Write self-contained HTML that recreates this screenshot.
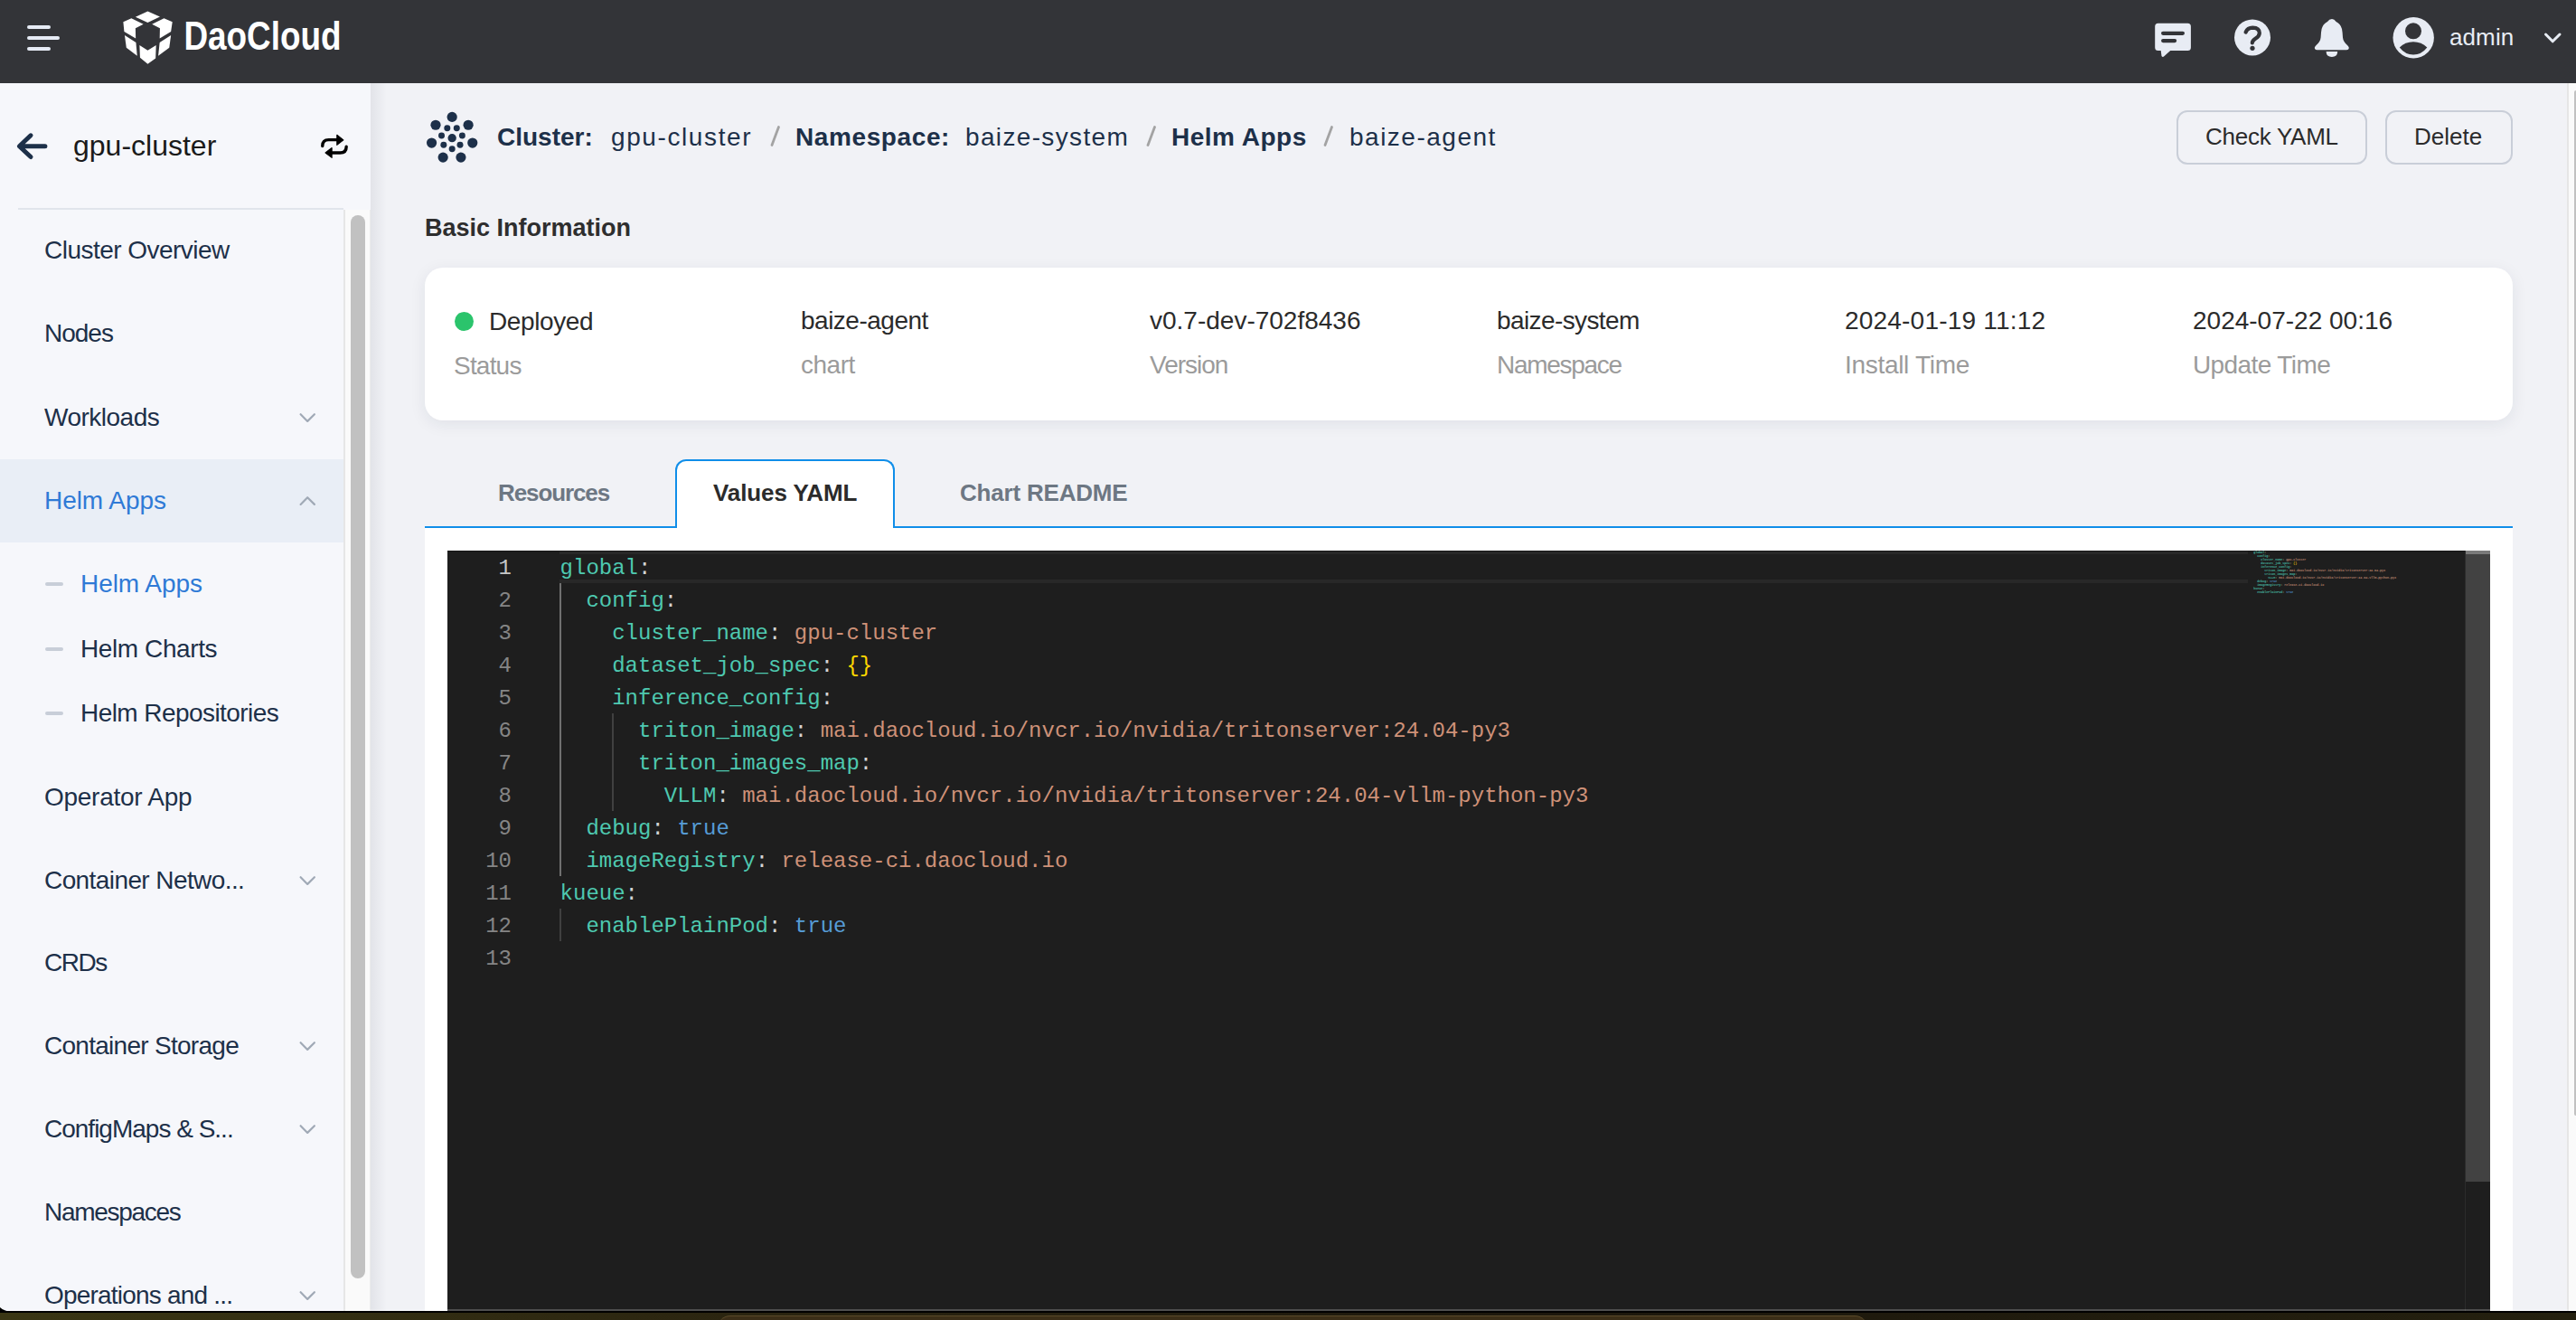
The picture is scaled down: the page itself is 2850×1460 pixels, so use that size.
<!DOCTYPE html><html><head><meta charset="utf-8"><style>
html,body{margin:0;padding:0;width:2850px;height:1460px;overflow:hidden;background:#f1f2f6;font-family:"Liberation Sans",sans-serif;}
.t{position:absolute;white-space:pre;line-height:0;}
svg{position:absolute;overflow:visible}
</style></head><body>
<div style="position:absolute;left:0px;top:92px;width:410px;height:1358px;background:#f6f7fb"></div>
<div style="position:absolute;left:410px;top:92px;width:18px;height:1358px;background:linear-gradient(to right,rgba(30,40,60,0.07),rgba(30,40,60,0))"></div>
<div style="position:absolute;left:0px;top:0px;width:2850px;height:92px;background:#333438"></div>
<div style="position:absolute;left:30px;top:28px;width:26px;height:4px;background:#e6ebf5;border-radius:2px"></div>
<div style="position:absolute;left:30px;top:40px;width:36px;height:4px;background:#e6ebf5;border-radius:2px"></div>
<div style="position:absolute;left:30px;top:52px;width:26px;height:4px;background:#e6ebf5;border-radius:2px"></div>
<svg style="left:130px;top:8px" width="70" height="70" viewBox="0 0 1320 1320"><g fill="#fff">
<polygon points="375,205 630,85 885,200 630,320"/>
<polygon points="120,305 290,232 540,355 375,440 380,650 140,510"/>
<polygon points="1145,305 970,232 720,355 885,440 880,650 1115,510"/>
<polygon points="150,585 385,735 410,1015 185,845"/>
<polygon points="1115,585 880,735 850,1015 1080,845"/>
<polygon points="460,790 630,900 805,790 795,1065 630,1185 470,1050"/>
</g></svg>
<svg style="left:0;top:0" width="400" height="92"><text x="203.5" y="54.6" font-family="Liberation Sans" font-weight="700" font-size="45" fill="#fff" textLength="174" lengthAdjust="spacingAndGlyphs">DaoCloud</text></svg>
<svg style="left:2380px;top:20px" width="50" height="50" viewBox="2380 20 50 50">
<path fill="#e8ecf4" d="M2387.7 25.7 H2420.4 A3.5 3.5 0 0 1 2423.9 29.2 V52.6 A3.5 3.5 0 0 1 2420.4 56.1 H2401.2 L2394 62.6 Q2392.6 63.6 2391.5 62 L2390.7 56.1 H2387.7 A3.5 3.5 0 0 1 2384.2 52.6 V29.2 A3.5 3.5 0 0 1 2387.7 25.7 Z"/>
<rect x="2391" y="34.7" width="26" height="4.2" rx="2.1" fill="#333438"/>
<rect x="2391" y="42.9" width="17.2" height="4.3" rx="2.15" fill="#333438"/>
</svg>
<svg style="left:2460px;top:10px" width="60" height="60" viewBox="2460 10 60 60">
<circle cx="2492" cy="41.4" r="20" fill="#e8ecf4"/>
<path d="M2484.6 35.6 Q2486.6 30.6 2492.2 30.6 Q2499.8 30.8 2499.8 36.6 Q2499.6 40 2495.6 42.6 Q2492 45 2491.8 47.4" fill="none" stroke="#333438" stroke-width="4.2" stroke-linecap="round"/>
<circle cx="2492" cy="53.3" r="2.6" fill="#333438"/>
</svg>
<svg style="left:2550px;top:10px" width="60" height="60" viewBox="2550 10 60 60">
<path fill="#e8ecf4" d="M2580 21 Q2582.6 21 2584.6 24 Q2589.6 26.5 2591 32 Q2591.8 36 2592 41.5 Q2592.4 46 2597 50 Q2599.6 52.4 2598.4 54.2 Q2597.6 55.2 2596 55.2 H2563.6 Q2562 55.2 2561.2 54.2 Q2560 52.4 2562.6 50 Q2567.2 46 2567.6 41.5 Q2567.8 36 2568.6 32 Q2570 26.5 2575 24 Q2577 21 2580 21 Z"/>
<path fill="#e8ecf4" d="M2573.6 57 H2586.2 Q2586 62.9 2579.9 62.9 Q2573.8 62.9 2573.6 57 Z"/>
</svg>
<svg style="left:2640px;top:10px" width="60" height="60" viewBox="2640 10 60 60">
<circle cx="2670.2" cy="41.8" r="22.7" fill="#e8ecf4"/>
<circle cx="2670" cy="34.3" r="9" fill="#333438"/>
<path d="M2654.8 52.4 Q2661 46.3 2670 46.3 Q2679 46.3 2685.3 52.4 Q2679 60.4 2670 60.4 Q2661 60.4 2654.8 52.4 Z" fill="#333438"/>
</svg>
<div class="t" style="left:2710px;top:41px;font-size:26px;font-weight:400;color:#e8ecf4;letter-spacing:0.1px;font-family:'Liberation Sans',sans-serif;">admin</div>
<svg style="left:2810px;top:30px" width="30" height="24" viewBox="2810 30 30 24"><path d="M2816.5 38 L2824.2 45.8 L2832 38" fill="none" stroke="#e8ecf4" stroke-width="3" stroke-linecap="round" stroke-linejoin="round"/></svg>
<svg style="left:10px;top:140px" width="50" height="45" viewBox="10 140 50 45"><path d="M34 149.8 L21.4 161.7 L34 173.5 M21.8 161.7 H49.9" fill="none" stroke="#1d3049" stroke-width="5" stroke-linecap="round" stroke-linejoin="round"/></svg>
<div class="t" style="left:81px;top:161px;font-size:32px;font-weight:400;color:#1a1a1a;letter-spacing:0px;font-family:'Liberation Sans',sans-serif;">gpu-cluster</div>
<svg style="left:345px;top:140px" width="50" height="45" viewBox="0 0 1467 1320">
<path d="M345 630 Q345 430 545 430 H830" fill="none" stroke="#000" stroke-width="100" stroke-linecap="round"/>
<polygon points="815,270 1025,435 815,600" fill="#000" stroke="#000" stroke-width="30" stroke-linejoin="round"/>
<path d="M1120 650 Q1120 850 920 850 H640" fill="none" stroke="#000" stroke-width="100" stroke-linecap="round"/>
<polygon points="650,690 440,850 650,1010" fill="#000" stroke="#000" stroke-width="30" stroke-linejoin="round"/>
</svg>
<div style="position:absolute;left:20px;top:230px;width:360px;height:2px;background:#e1e5ec"></div>
<div style="position:absolute;left:380px;top:232px;width:30px;height:1218px;background:#fafafa;border-left:2px solid #e6e6e6;border-right:1px solid #ececec;box-sizing:border-box"></div>
<div style="position:absolute;left:388px;top:238px;width:16px;height:1176px;background:#c1c1c1;border-radius:8px"></div>
<div style="position:absolute;left:0px;top:508px;width:380px;height:92px;background:#e9eef6"></div>
<div class="t" style="left:49px;top:277px;font-size:28px;font-weight:400;color:#1d3049;letter-spacing:-0.53px;font-family:'Liberation Sans',sans-serif;">Cluster Overview</div>
<div class="t" style="left:49px;top:369px;font-size:28px;font-weight:400;color:#1d3049;letter-spacing:-1.0px;font-family:'Liberation Sans',sans-serif;">Nodes</div>
<div class="t" style="left:49px;top:462px;font-size:28px;font-weight:400;color:#1d3049;letter-spacing:-0.5px;font-family:'Liberation Sans',sans-serif;">Workloads</div>
<svg style="left:320px;top:442px" width="40" height="40" viewBox="320 442 40 40"><path d="M332.6 458.2 L340.2 465.9 L347.9 458.2" fill="none" stroke="#a0a9b6" stroke-width="2.2" stroke-linecap="round" stroke-linejoin="round"/></svg>
<div class="t" style="left:49px;top:554px;font-size:28px;font-weight:400;color:#2f7ad6;letter-spacing:-0.05px;font-family:'Liberation Sans',sans-serif;">Helm Apps</div>
<svg style="left:320px;top:534px" width="40" height="40" viewBox="320 534 40 40"><path d="M332.6 557.9 L340.2 550.2 L347.9 557.9" fill="none" stroke="#a0a9b6" stroke-width="2.2" stroke-linecap="round" stroke-linejoin="round"/></svg>
<div class="t" style="left:49px;top:882px;font-size:28px;font-weight:400;color:#1d3049;letter-spacing:-0.27px;font-family:'Liberation Sans',sans-serif;">Operator App</div>
<div class="t" style="left:49px;top:974px;font-size:28px;font-weight:400;color:#1d3049;letter-spacing:-0.59px;font-family:'Liberation Sans',sans-serif;">Container Netwo...</div>
<svg style="left:320px;top:954px" width="40" height="40" viewBox="320 954 40 40"><path d="M332.6 970.2 L340.2 977.9 L347.9 970.2" fill="none" stroke="#a0a9b6" stroke-width="2.2" stroke-linecap="round" stroke-linejoin="round"/></svg>
<div class="t" style="left:49px;top:1065px;font-size:28px;font-weight:400;color:#1d3049;letter-spacing:-1.5px;font-family:'Liberation Sans',sans-serif;">CRDs</div>
<div class="t" style="left:49px;top:1157px;font-size:28px;font-weight:400;color:#1d3049;letter-spacing:-0.72px;font-family:'Liberation Sans',sans-serif;">Container Storage</div>
<svg style="left:320px;top:1137px" width="40" height="40" viewBox="320 1137 40 40"><path d="M332.6 1153.2 L340.2 1160.9 L347.9 1153.2" fill="none" stroke="#a0a9b6" stroke-width="2.2" stroke-linecap="round" stroke-linejoin="round"/></svg>
<div class="t" style="left:49px;top:1249px;font-size:28px;font-weight:400;color:#1d3049;letter-spacing:-1.0px;font-family:'Liberation Sans',sans-serif;">ConfigMaps &amp; S...</div>
<svg style="left:320px;top:1229px" width="40" height="40" viewBox="320 1229 40 40"><path d="M332.6 1245.2 L340.2 1252.9 L347.9 1245.2" fill="none" stroke="#a0a9b6" stroke-width="2.2" stroke-linecap="round" stroke-linejoin="round"/></svg>
<div class="t" style="left:49px;top:1341px;font-size:28px;font-weight:400;color:#1d3049;letter-spacing:-1.3px;font-family:'Liberation Sans',sans-serif;">Namespaces</div>
<div class="t" style="left:49px;top:1433px;font-size:28px;font-weight:400;color:#1d3049;letter-spacing:-0.8px;font-family:'Liberation Sans',sans-serif;">Operations and ...</div>
<svg style="left:320px;top:1413px" width="40" height="40" viewBox="320 1413 40 40"><path d="M332.6 1429.2 L340.2 1436.9 L347.9 1429.2" fill="none" stroke="#a0a9b6" stroke-width="2.2" stroke-linecap="round" stroke-linejoin="round"/></svg>
<div class="t" style="left:89px;top:646px;font-size:28px;font-weight:400;color:#2f7ad6;letter-spacing:-0.05px;font-family:'Liberation Sans',sans-serif;">Helm Apps</div>
<div style="position:absolute;left:50px;top:644px;width:20px;height:4px;background:#c8ced8;border-radius:2px"></div>
<div class="t" style="left:89px;top:718px;font-size:28px;font-weight:400;color:#1d3049;letter-spacing:-0.4px;font-family:'Liberation Sans',sans-serif;">Helm Charts</div>
<div style="position:absolute;left:50px;top:716px;width:20px;height:4px;background:#c8ced8;border-radius:2px"></div>
<div class="t" style="left:89px;top:789px;font-size:28px;font-weight:400;color:#1d3049;letter-spacing:-0.56px;font-family:'Liberation Sans',sans-serif;">Helm Repositories</div>
<div style="position:absolute;left:50px;top:787px;width:20px;height:4px;background:#c8ced8;border-radius:2px"></div>
<svg style="left:400px;top:92px" width="140" height="100" viewBox="0 0 601 428.3"><circle cx="430" cy="160" r="24" fill="#1d3049"/><circle cx="352" cy="198" r="24" fill="#1d3049"/><circle cx="507" cy="198" r="24" fill="#1d3049"/><circle cx="333" cy="283" r="24" fill="#1d3049"/><circle cx="527" cy="283" r="24" fill="#1d3049"/><circle cx="387" cy="352" r="24" fill="#1d3049"/><circle cx="472" cy="352" r="24" fill="#1d3049"/><circle cx="407" cy="213" r="15" fill="#1d3049"/><circle cx="452" cy="213" r="15" fill="#1d3049"/><circle cx="380" cy="248" r="15" fill="#1d3049"/><circle cx="478" cy="248" r="15" fill="#1d3049"/><circle cx="390" cy="292" r="15" fill="#1d3049"/><circle cx="468" cy="292" r="15" fill="#1d3049"/><circle cx="430" cy="312" r="15" fill="#1d3049"/><circle cx="430" cy="260" r="20" fill="#1d3049"/></svg>
<div class="t" style="left:550px;top:152px;font-size:28px;font-weight:700;color:#1d3049;letter-spacing:0px;font-family:'Liberation Sans',sans-serif;">Cluster:</div>
<div class="t" style="left:676px;top:152px;font-size:28px;font-weight:400;color:#1d3049;letter-spacing:1.6px;font-family:'Liberation Sans',sans-serif;">gpu-cluster</div>
<div class="t" style="left:880px;top:152px;font-size:28px;font-weight:700;color:#1d3049;letter-spacing:0.6px;font-family:'Liberation Sans',sans-serif;">Namespace:</div>
<div class="t" style="left:1068px;top:152px;font-size:28px;font-weight:400;color:#1d3049;letter-spacing:1.35px;font-family:'Liberation Sans',sans-serif;">baize-system</div>
<div class="t" style="left:1296px;top:152px;font-size:28px;font-weight:700;color:#1d3049;letter-spacing:0.5px;font-family:'Liberation Sans',sans-serif;">Helm Apps</div>
<div class="t" style="left:1493px;top:152px;font-size:28px;font-weight:400;color:#1d3049;letter-spacing:1.5px;font-family:'Liberation Sans',sans-serif;">baize-agent</div>
<svg style="left:848.5px;top:130px" width="20" height="40" viewBox="848.5 130 20 40"><line x1="853.5" y1="160.5" x2="861.0" y2="140.5" stroke="#a3a3a3" stroke-width="2.8" stroke-linecap="round"/></svg>
<svg style="left:1264.5px;top:130px" width="20" height="40" viewBox="1264.5 130 20 40"><line x1="1269.5" y1="160.5" x2="1277.0" y2="140.5" stroke="#a3a3a3" stroke-width="2.8" stroke-linecap="round"/></svg>
<svg style="left:1461px;top:130px" width="20" height="40" viewBox="1461 130 20 40"><line x1="1466" y1="160.5" x2="1473.5" y2="140.5" stroke="#a3a3a3" stroke-width="2.8" stroke-linecap="round"/></svg>
<div style="position:absolute;left:2408px;top:122px;width:211px;height:60px;border:2px solid #c9ced8;border-radius:12px;box-sizing:border-box"></div>
<div class="t" style="left:2440px;top:151px;font-size:26px;font-weight:400;color:#2b2b2b;letter-spacing:-0.25px;font-family:'Liberation Sans',sans-serif;">Check YAML</div>
<div style="position:absolute;left:2639px;top:122px;width:141px;height:60px;border:2px solid #c9ced8;border-radius:12px;box-sizing:border-box"></div>
<div class="t" style="left:2671px;top:151px;font-size:26px;font-weight:400;color:#2b2b2b;letter-spacing:0px;font-family:'Liberation Sans',sans-serif;">Delete</div>
<div class="t" style="left:470px;top:252px;font-size:27px;font-weight:700;color:#2e2e2e;letter-spacing:0px;font-family:'Liberation Sans',sans-serif;">Basic Information</div>
<div style="position:absolute;left:470px;top:296px;width:2310px;height:169px;background:#fff;border-radius:20px;box-shadow:0 4px 18px rgba(30,40,60,0.08)"></div>
<div style="position:absolute;left:503px;top:345px;width:21px;height:21px;border-radius:50%;background:#2bc46c"></div>
<div class="t" style="left:541px;top:356px;font-size:28px;font-weight:400;color:#2b2b2b;letter-spacing:-0.4px;font-family:'Liberation Sans',sans-serif;">Deployed</div>
<div class="t" style="left:502px;top:405px;font-size:28px;font-weight:400;color:#9b9b9b;letter-spacing:-0.8px;font-family:'Liberation Sans',sans-serif;">Status</div>
<div class="t" style="left:886px;top:355px;font-size:28px;font-weight:400;color:#2b2b2b;letter-spacing:-0.5px;font-family:'Liberation Sans',sans-serif;">baize-agent</div>
<div class="t" style="left:886px;top:404px;font-size:28px;font-weight:400;color:#9b9b9b;letter-spacing:-0.5px;font-family:'Liberation Sans',sans-serif;">chart</div>
<div class="t" style="left:1272px;top:355px;font-size:28px;font-weight:400;color:#2b2b2b;letter-spacing:0px;font-family:'Liberation Sans',sans-serif;">v0.7-dev-702f8436</div>
<div class="t" style="left:1272px;top:404px;font-size:28px;font-weight:400;color:#9b9b9b;letter-spacing:-1.0px;font-family:'Liberation Sans',sans-serif;">Version</div>
<div class="t" style="left:1656px;top:355px;font-size:28px;font-weight:400;color:#2b2b2b;letter-spacing:-0.6px;font-family:'Liberation Sans',sans-serif;">baize-system</div>
<div class="t" style="left:1656px;top:404px;font-size:28px;font-weight:400;color:#9b9b9b;letter-spacing:-1.3px;font-family:'Liberation Sans',sans-serif;">Namespace</div>
<div class="t" style="left:2041px;top:355px;font-size:28px;font-weight:400;color:#2b2b2b;letter-spacing:0.2px;font-family:'Liberation Sans',sans-serif;">2024-01-19 11:12</div>
<div class="t" style="left:2041px;top:404px;font-size:28px;font-weight:400;color:#9b9b9b;letter-spacing:-0.3px;font-family:'Liberation Sans',sans-serif;">Install Time</div>
<div class="t" style="left:2426px;top:355px;font-size:28px;font-weight:400;color:#2b2b2b;letter-spacing:0px;font-family:'Liberation Sans',sans-serif;">2024-07-22 00:16</div>
<div class="t" style="left:2426px;top:404px;font-size:28px;font-weight:400;color:#9b9b9b;letter-spacing:-0.6px;font-family:'Liberation Sans',sans-serif;">Update Time</div>
<div style="position:absolute;left:470px;top:582px;width:2310px;height:2px;background:#108ee9"></div>
<div style="position:absolute;left:470px;top:584px;width:2310px;height:866px;background:#fff"></div>
<div style="position:absolute;left:747px;top:508px;width:243px;height:76px;background:#fff;border:2px solid #108ee9;border-bottom:none;border-radius:12px 12px 0 0;box-sizing:border-box"></div>
<div class="t" style="left:551px;top:545px;font-size:26px;font-weight:700;color:#6d7783;letter-spacing:-1.1px;font-family:'Liberation Sans',sans-serif;">Resources</div>
<div class="t" style="left:789px;top:545px;font-size:26px;font-weight:700;color:#2b2b2b;letter-spacing:-0.1px;font-family:'Liberation Sans',sans-serif;">Values YAML</div>
<div class="t" style="left:1062px;top:545px;font-size:26px;font-weight:700;color:#6d7783;letter-spacing:-0.2px;font-family:'Liberation Sans',sans-serif;">Chart README</div>
<div style="position:absolute;left:495px;top:609px;width:2260px;height:841px;background:#1e1e1e"></div>
<div style="position:absolute;left:495px;top:609px;width:2260px;height:1px;background:#161616"></div>
<div style="position:absolute;left:619px;top:610px;width:1868px;height:35px;border-top:3px solid #282828;border-bottom:4px solid #282828;box-sizing:border-box"></div>
<div class="t" style="left:551.6px;top:629px;font-size:24px;font-weight:400;color:#c6c6c6;letter-spacing:0px;font-family:'Liberation Mono',sans-serif;">1</div>
<div class="t" style="left:619.6px;top:629px;font-size:24px;font-family:'Liberation Mono',monospace"><span style="color:#4ec9b0">global</span><span style="color:#d4d4d4">:</span></div>
<div class="t" style="left:551.6px;top:665px;font-size:24px;font-weight:400;color:#858585;letter-spacing:0px;font-family:'Liberation Mono',sans-serif;">2</div>
<div class="t" style="left:648.4px;top:665px;font-size:24px;font-family:'Liberation Mono',monospace"><span style="color:#4ec9b0">config</span><span style="color:#d4d4d4">:</span></div>
<div class="t" style="left:551.6px;top:701px;font-size:24px;font-weight:400;color:#858585;letter-spacing:0px;font-family:'Liberation Mono',sans-serif;">3</div>
<div class="t" style="left:677.2px;top:701px;font-size:24px;font-family:'Liberation Mono',monospace"><span style="color:#4ec9b0">cluster_name</span><span style="color:#d4d4d4">: </span><span style="color:#ce9178">gpu-cluster</span></div>
<div class="t" style="left:551.6px;top:737px;font-size:24px;font-weight:400;color:#858585;letter-spacing:0px;font-family:'Liberation Mono',sans-serif;">4</div>
<div class="t" style="left:677.2px;top:737px;font-size:24px;font-family:'Liberation Mono',monospace"><span style="color:#4ec9b0">dataset_job_spec</span><span style="color:#d4d4d4">: </span><span style="color:#ffd700">{}</span></div>
<div class="t" style="left:551.6px;top:773px;font-size:24px;font-weight:400;color:#858585;letter-spacing:0px;font-family:'Liberation Mono',sans-serif;">5</div>
<div class="t" style="left:677.2px;top:773px;font-size:24px;font-family:'Liberation Mono',monospace"><span style="color:#4ec9b0">inference_config</span><span style="color:#d4d4d4">:</span></div>
<div class="t" style="left:551.6px;top:809px;font-size:24px;font-weight:400;color:#858585;letter-spacing:0px;font-family:'Liberation Mono',sans-serif;">6</div>
<div class="t" style="left:706.0px;top:809px;font-size:24px;font-family:'Liberation Mono',monospace"><span style="color:#4ec9b0">triton_image</span><span style="color:#d4d4d4">: </span><span style="color:#ce9178">mai.daocloud.io/nvcr.io/nvidia/tritonserver:24.04-py3</span></div>
<div class="t" style="left:551.6px;top:845px;font-size:24px;font-weight:400;color:#858585;letter-spacing:0px;font-family:'Liberation Mono',sans-serif;">7</div>
<div class="t" style="left:706.0px;top:845px;font-size:24px;font-family:'Liberation Mono',monospace"><span style="color:#4ec9b0">triton_images_map</span><span style="color:#d4d4d4">:</span></div>
<div class="t" style="left:551.6px;top:881px;font-size:24px;font-weight:400;color:#858585;letter-spacing:0px;font-family:'Liberation Mono',sans-serif;">8</div>
<div class="t" style="left:734.8px;top:881px;font-size:24px;font-family:'Liberation Mono',monospace"><span style="color:#4ec9b0">VLLM</span><span style="color:#d4d4d4">: </span><span style="color:#ce9178">mai.daocloud.io/nvcr.io/nvidia/tritonserver:24.04-vllm-python-py3</span></div>
<div class="t" style="left:551.6px;top:917px;font-size:24px;font-weight:400;color:#858585;letter-spacing:0px;font-family:'Liberation Mono',sans-serif;">9</div>
<div class="t" style="left:648.4px;top:917px;font-size:24px;font-family:'Liberation Mono',monospace"><span style="color:#4ec9b0">debug</span><span style="color:#d4d4d4">: </span><span style="color:#569cd6">true</span></div>
<div class="t" style="left:537.2px;top:953px;font-size:24px;font-weight:400;color:#858585;letter-spacing:0px;font-family:'Liberation Mono',sans-serif;">10</div>
<div class="t" style="left:648.4px;top:953px;font-size:24px;font-family:'Liberation Mono',monospace"><span style="color:#4ec9b0">imageRegistry</span><span style="color:#d4d4d4">: </span><span style="color:#ce9178">release-ci.daocloud.io</span></div>
<div class="t" style="left:537.2px;top:989px;font-size:24px;font-weight:400;color:#858585;letter-spacing:0px;font-family:'Liberation Mono',sans-serif;">11</div>
<div class="t" style="left:619.6px;top:989px;font-size:24px;font-family:'Liberation Mono',monospace"><span style="color:#4ec9b0">kueue</span><span style="color:#d4d4d4">:</span></div>
<div class="t" style="left:537.2px;top:1025px;font-size:24px;font-weight:400;color:#858585;letter-spacing:0px;font-family:'Liberation Mono',sans-serif;">12</div>
<div class="t" style="left:648.4px;top:1025px;font-size:24px;font-family:'Liberation Mono',monospace"><span style="color:#4ec9b0">enablePlainPod</span><span style="color:#d4d4d4">: </span><span style="color:#569cd6">true</span></div>
<div class="t" style="left:537.2px;top:1061px;font-size:24px;font-weight:400;color:#858585;letter-spacing:0px;font-family:'Liberation Mono',sans-serif;">13</div>
<div style="position:absolute;left:619px;top:645px;width:2px;height:324px;background:#707070"></div>
<div style="position:absolute;left:619px;top:1005px;width:2px;height:36px;background:#404040"></div>
<div style="position:absolute;left:677px;top:789px;width:2px;height:108px;background:#404040"></div>
<div style="position:absolute;left:2493.3px;top:609px;width:232px;height:60px;font-family:'Liberation Mono',monospace;font-size:3.3333px;font-weight:700;opacity:0.85"><div style="position:absolute;left:0;top:0px;height:4px;line-height:4px;white-space:pre"><span style="color:#4ec9b0">global</span><span style="color:#d4d4d4">:</span></div><div style="position:absolute;left:0;top:4px;height:4px;line-height:4px;white-space:pre">  <span style="color:#4ec9b0">config</span><span style="color:#d4d4d4">:</span></div><div style="position:absolute;left:0;top:8px;height:4px;line-height:4px;white-space:pre">    <span style="color:#4ec9b0">cluster_name</span><span style="color:#d4d4d4">: </span><span style="color:#ce9178">gpu-cluster</span></div><div style="position:absolute;left:0;top:12px;height:4px;line-height:4px;white-space:pre">    <span style="color:#4ec9b0">dataset_job_spec</span><span style="color:#d4d4d4">: </span><span style="color:#ffd700">{}</span></div><div style="position:absolute;left:0;top:16px;height:4px;line-height:4px;white-space:pre">    <span style="color:#4ec9b0">inference_config</span><span style="color:#d4d4d4">:</span></div><div style="position:absolute;left:0;top:20px;height:4px;line-height:4px;white-space:pre">      <span style="color:#4ec9b0">triton_image</span><span style="color:#d4d4d4">: </span><span style="color:#ce9178">mai.daocloud.io/nvcr.io/nvidia/tritonserver:24.04-py3</span></div><div style="position:absolute;left:0;top:24px;height:4px;line-height:4px;white-space:pre">      <span style="color:#4ec9b0">triton_images_map</span><span style="color:#d4d4d4">:</span></div><div style="position:absolute;left:0;top:28px;height:4px;line-height:4px;white-space:pre">        <span style="color:#4ec9b0">VLLM</span><span style="color:#d4d4d4">: </span><span style="color:#ce9178">mai.daocloud.io/nvcr.io/nvidia/tritonserver:24.04-vllm-python-py3</span></div><div style="position:absolute;left:0;top:32px;height:4px;line-height:4px;white-space:pre">  <span style="color:#4ec9b0">debug</span><span style="color:#d4d4d4">: </span><span style="color:#569cd6">true</span></div><div style="position:absolute;left:0;top:36px;height:4px;line-height:4px;white-space:pre">  <span style="color:#4ec9b0">imageRegistry</span><span style="color:#d4d4d4">: </span><span style="color:#ce9178">release-ci.daocloud.io</span></div><div style="position:absolute;left:0;top:40px;height:4px;line-height:4px;white-space:pre"><span style="color:#4ec9b0">kueue</span><span style="color:#d4d4d4">:</span></div><div style="position:absolute;left:0;top:44px;height:4px;line-height:4px;white-space:pre">  <span style="color:#4ec9b0">enablePlainPod</span><span style="color:#d4d4d4">: </span><span style="color:#569cd6">true</span></div><div style="position:absolute;left:0;top:48px;height:4px;line-height:4px;white-space:pre"></div></div>
<div style="position:absolute;left:2727px;top:609px;width:1px;height:841px;background:#2c2c2c"></div>
<div style="position:absolute;left:2728px;top:609px;width:27px;height:698px;background:#424242"></div>
<div style="position:absolute;left:2728px;top:609px;width:27px;height:4px;background:#7a7a7a"></div>
<div style="position:absolute;left:2840px;top:92px;width:10px;height:1358px;background:#fafafa;border-left:2px solid #e6e6e6;box-sizing:border-box"></div>
<div style="position:absolute;left:2848px;top:100px;width:2px;height:1134px;background:#c1c1c1;border-radius:8px 0 0 8px"></div>
<div style="position:absolute;left:0px;top:1448px;width:2850px;height:2px;background:rgba(255,255,255,0.22)"></div>
<div style="position:absolute;left:0px;top:1450px;width:2850px;height:2px;background:#000"></div>
<div style="position:absolute;left:0px;top:1452px;width:2850px;height:8px;background:linear-gradient(to right,#3a3614,#2a2410 30%,#1c170c 60%,#24200f)"></div>
<div style="position:absolute;left:794px;top:1455px;width:1272px;height:15px;background:#3b2e17;border-radius:14px 14px 0 0;border-top:1px solid #5a4a2a;box-sizing:border-box"></div>
<svg style="left:0;top:1436px" width="20" height="16" viewBox="0 1436 20 16"><path d="M0 1436 V1452 H16 Q4 1450 0 1446 Z" fill="#000"/></svg>
</body></html>
